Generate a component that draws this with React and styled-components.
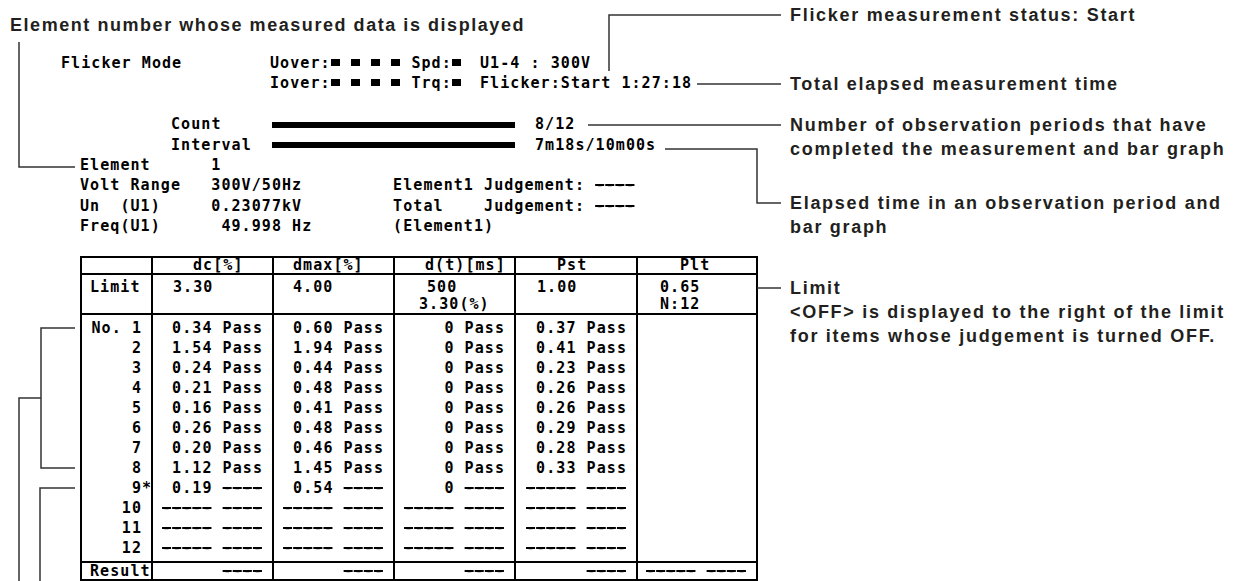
import React from "react";
import styled, { createGlobalStyle } from "styled-components";

const GlobalStyle = createGlobalStyle`
  html, body {
    margin: 0;
    padding: 0;
    background: #fff;
  }
`;

const Page = styled.div`
  position: relative;
  width: 1236px;
  height: 581px;
  display: flex;
  overflow: hidden;
  background: #fff;
`;

const Left = styled.div`
  flex: none;
  width: 790px;
  padding-top: 13px;
`;

const Title = styled.h1`
  margin: 0 0 0 10px;
  font: bold 18px/24px "Liberation Sans", Arial, sans-serif;
  letter-spacing: 1.55px;
  color: #231f20;
  white-space: nowrap;
`;

const Screen = styled.div`
  margin-top: 16px;
  font-family: "DejaVu Sans Mono", monospace;
  font-weight: bold;
  font-size: 15px;
  letter-spacing: 1.07px;
  color: #000;
  white-space: pre;
`;

const Line = styled.div`
  display: flex;
  align-items: center;
  height: 20.4px;
  line-height: 20.4px;
  padding-left: ${p => p.$indent || 0}px;
`;

const Cell = styled.span`
  flex: none;
  display: block;
  width: ${p => (p.$w ? `${p.$w}px` : "auto")};
`;

const Square = styled.span`
  display: inline-block;
  vertical-align: middle;
  width: 10.1px;
  height: 7px;
  margin-top: -2px;
  &::before {
    content: "";
    display: block;
    width: 9px;
    height: 7px;
    background: #000;
  }
`;

const Bar = styled.span`
  display: inline-block;
  vertical-align: middle;
  width: ${p => p.$w}px;
  height: 6px;
  background: #000;
`;

// a screen dash fills its character cell, as on the instrument's display
const DashChar = styled.span`
  display: inline-block;
  font-weight: normal;
  letter-spacing: 0;
  margin-right: 1.07px;
  text-decoration: line-through;
  text-decoration-thickness: 1.5px;
`;

const Grid = styled.div`
  display: grid;
  grid-template-columns: 71px 121px 121px 121px 122px 120px;
  grid-template-rows: 17px 40px 248px 18px;
  margin: 19px 0 0 80px;
  width: 676px;
  border-top: 2px solid #000;
  border-left: 2px solid #000;
`;

const GridCell = styled.div`
  border-right: 2px solid #000;
  border-bottom: 2px solid #000;
  padding-left: ${p => p.$pl || 0}px;
  padding-right: ${p => p.$pr || 0}px;
  padding-top: ${p => p.$pt || 0}px;
  text-align: ${p => p.$align || "left"};
  line-height: ${p => p.$lh || 16}px;
`;

const Row = styled.div`
  height: 20px;
  line-height: 20px;
`;

const Star = styled.span`
  display: inline-block;
  width: 0;
  overflow: visible;
`;

const Notes = styled.div`
  flex: 1;
  padding-top: 3px;
  display: flex;
  flex-direction: column;
`;

const Note = styled.p`
  margin: ${p => p.$gap || 0}px 0 0;
  font: bold 18px/24px "Liberation Sans", Arial, sans-serif;
  letter-spacing: 1.7px;
  color: #231f20;
  white-space: nowrap;
`;

const Leaders = styled.svg`
  position: absolute;
  left: 0;
  top: 0;
  pointer-events: none;
`;

const dashed = text =>
  text.split(/(-+)/).map((part, i) =>
    part.startsWith("-")
      ? [...part].map((c, j) => <DashChar key={`${i}-${j}`}>{c}</DashChar>)
      : part
  );

const squares = n =>
  Array.from({ length: n }).map((_, i) => (
    <React.Fragment key={i}>
      <Square />
      {i < n - 1 ? " " : ""}
    </React.Fragment>
  ));

const columns = [
  { head: "dc[%]", pad: 40, limit: ["3.30"], lpad: 20 },
  { head: "dmax[%]", pad: 19, limit: ["4.00"], lpad: 19 },
  { head: "d(t)[ms]", pad: 30, limit: ["500", "3.30(%)"], lpad: [32, 24] },
  { head: "Pst", pad: 41, limit: ["1.00"], lpad: 21 },
  { head: "Plt", pad: 42, limit: ["0.65", "N:12"], lpad: 22 },
];

const data = [
  ["0.34 Pass", "0.60 Pass", "0 Pass", "0.37 Pass"],
  ["1.54 Pass", "1.94 Pass", "0 Pass", "0.41 Pass"],
  ["0.24 Pass", "0.44 Pass", "0 Pass", "0.23 Pass"],
  ["0.21 Pass", "0.48 Pass", "0 Pass", "0.26 Pass"],
  ["0.16 Pass", "0.41 Pass", "0 Pass", "0.26 Pass"],
  ["0.26 Pass", "0.48 Pass", "0 Pass", "0.29 Pass"],
  ["0.20 Pass", "0.46 Pass", "0 Pass", "0.28 Pass"],
  ["1.12 Pass", "1.45 Pass", "0 Pass", "0.33 Pass"],
  ["0.19 ----", "0.54 ----", "0 ----", "----- ----"],
  ["----- ----", "----- ----", "----- ----", "----- ----"],
  ["----- ----", "----- ----", "----- ----", "----- ----"],
  ["----- ----", "----- ----", "----- ----", "----- ----"],
];

const leaderPaths = [
  "M609 71 V15 H781",
  "M697 84 H781",
  "M588 125 H781",
  "M665 149 H757 V203 H781",
  "M757 288 H781",
  "M19 42 V167 H75",
  "M75 328 H41 V468 H75",
  "M41 398 H19 V581",
  "M75 488 H40 V581",
];

export default function App() {
  return (
    <>
      <GlobalStyle />
      <Page>
        <Left>
          <Title>Element number whose measured data is displayed</Title>
          <Screen>
            <Line $indent={61}>
              <Cell $w={209}>Flicker Mode</Cell>
              <Cell $w={210}>
                Uover:{squares(4)} Spd:<Square />
              </Cell>
              <Cell>U1-4 : 300V</Cell>
            </Line>
            <Line $indent={61}>
              <Cell $w={209} />
              <Cell $w={210}>
                Iover:{squares(4)} Trq:<Square />
              </Cell>
              <Cell>Flicker:Start 1:27:18</Cell>
            </Line>
            <Line />
            <Line $indent={171}>
              <Cell $w={101}>Count</Cell>
              <Cell $w={263}>
                <Bar $w={243} />
              </Cell>
              <Cell>8/12</Cell>
            </Line>
            <Line $indent={171}>
              <Cell $w={101}>Interval</Cell>
              <Cell $w={263}>
                <Bar $w={243} />
              </Cell>
              <Cell>7m18s/10m00s</Cell>
            </Line>
            <Line $indent={80}>{"Element      1"}</Line>
            <Line $indent={80}>
              {dashed("Volt Range   300V/50Hz         Element1 Judgement: ----")}
            </Line>
            <Line $indent={80}>
              {dashed("Un  (U1)     0.23077kV         Total    Judgement: ----")}
            </Line>
            <Line $indent={80}>
              {"Freq(U1)      49.998 Hz        (Element1)"}
            </Line>

            <Grid>
              <GridCell />
              {columns.map(c => (
                <GridCell key={c.head} $pl={c.pad} $lh={15}>
                  {c.head}
                </GridCell>
              ))}

              <GridCell $pl={8} $pt={4} $lh={17}>
                Limit
              </GridCell>
              {columns.map(c => (
                <GridCell key={c.head} $pt={4} $lh={17}>
                  {c.limit.map((t, i) => (
                    <div
                      key={t}
                      style={{
                        paddingLeft: Array.isArray(c.lpad) ? c.lpad[i] : c.lpad,
                      }}
                    >
                      {t}
                    </div>
                  ))}
                </GridCell>
              ))}

              <GridCell $pt={3} $pr={9} $align="right">
                {data.map((_, i) => (
                  <Row key={i}>
                    {i === 0 ? "No. 1" : i + 1}
                    {i === 8 && <Star>*</Star>}
                  </Row>
                ))}
              </GridCell>
              {[0, 1, 2, 3].map(c => (
                <GridCell key={c} $pt={3} $pr={9} $align="right">
                  {data.map((r, i) => (
                    <Row key={i}>{dashed(r[c])}</Row>
                  ))}
                </GridCell>
              ))}
              <GridCell />

              <GridCell $pl={8} $lh={16}>
                Result
              </GridCell>
              {[0, 1, 2, 3].map(c => (
                <GridCell key={c} $pr={9} $align="right" $lh={16}>
                  {dashed("----")}
                </GridCell>
              ))}
              <GridCell $pr={9} $align="right" $lh={16}>
                {dashed("----- ----")}
              </GridCell>
            </Grid>
          </Screen>
        </Left>

        <Notes>
          <Note>Flicker measurement status: Start</Note>
          <Note $gap={45}>Total elapsed measurement time</Note>
          <Note $gap={17}>
            Number of observation periods that have
            <br />
            completed the measurement and bar graph
          </Note>
          <Note $gap={30}>
            Elapsed time in an observation period and
            <br />
            bar graph
          </Note>
          <Note $gap={37}>
            Limit
            <br />
            &lt;OFF&gt; is displayed to the right of the limit
            <br />
            for items whose judgement is turned OFF.
          </Note>
        </Notes>

        <Leaders width="1236" height="581" viewBox="0 0 1236 581">
          {leaderPaths.map(d => (
            <path key={d} d={d} fill="none" stroke="#333" strokeWidth="1.5" />
          ))}
        </Leaders>
      </Page>
    </>
  );
}
